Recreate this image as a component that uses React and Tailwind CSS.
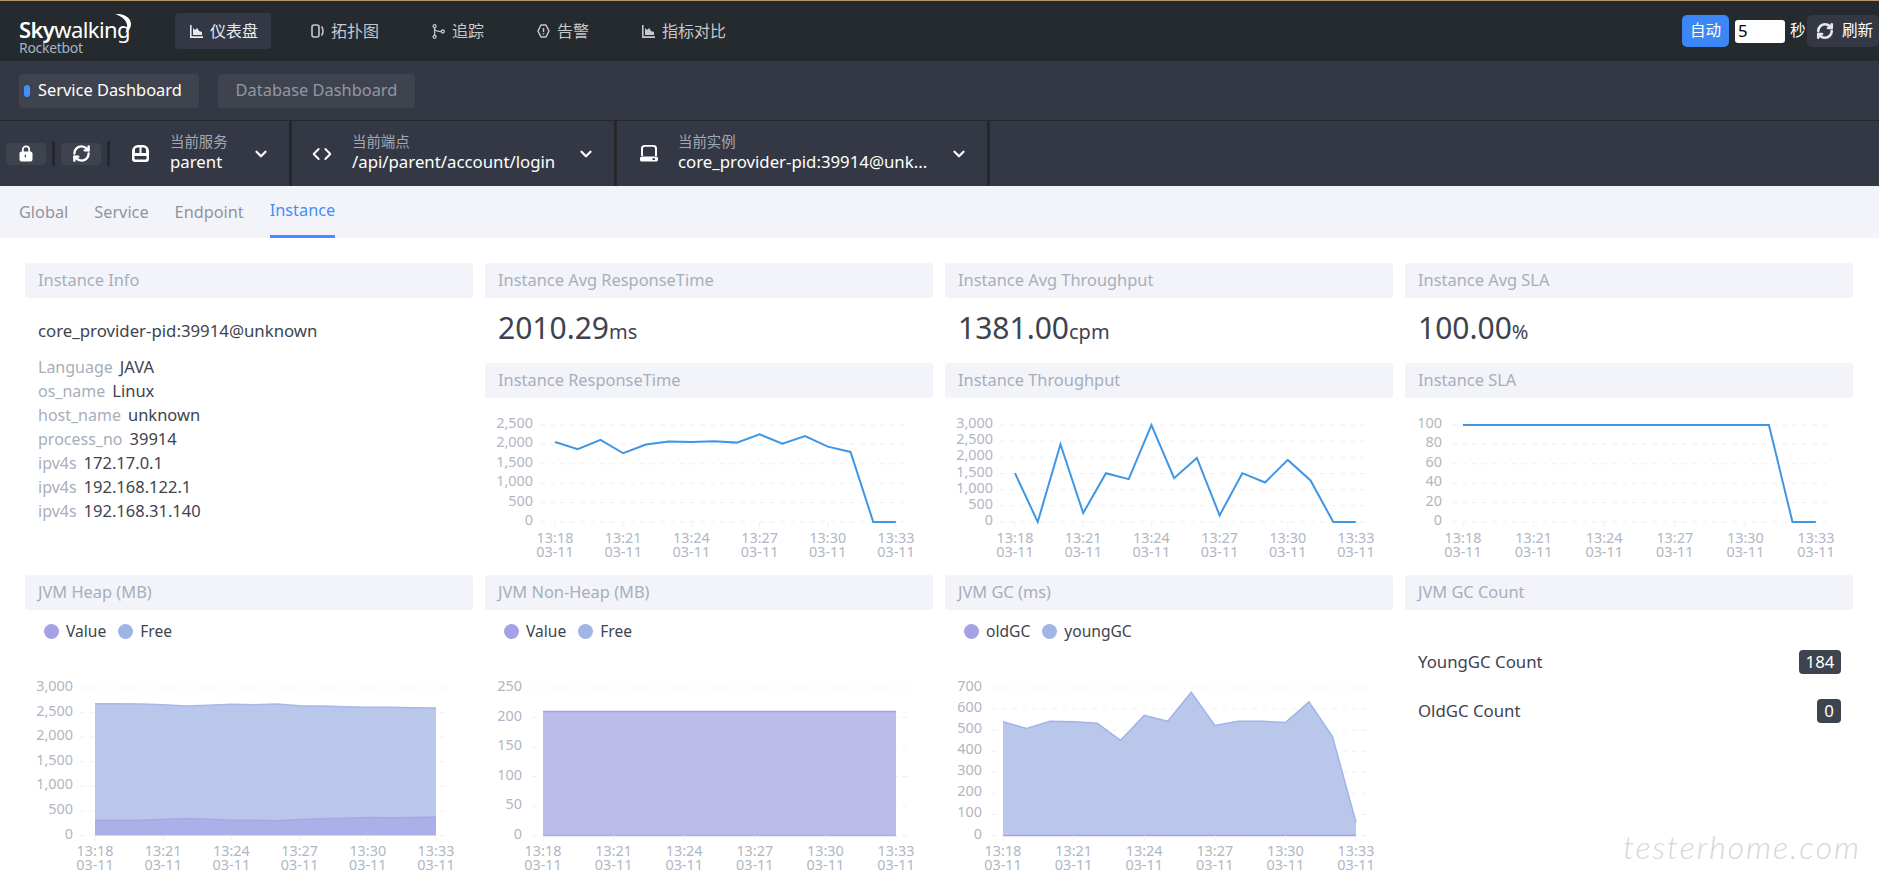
import { ChevronDown, Code, RefreshCw } from 'lucide-react';

const font = { fontFamily: '"Noto Sans", "Noto Sans CJK SC", sans-serif' };

const times = ['13:18', '13:21', '13:24', '13:27', '13:30', '13:33'];

const rtData = [2063, 1875, 2115, 1772, 1995, 2072, 2063, 2080, 2046, 2260, 2020, 2217, 1943, 1806, 0, 0];
const tpData = [1510, 0, 2404, 277, 1510, 1325, 3000, 1356, 1983, 205, 1510, 1222, 1921, 1284, 0, 0];
const slaData = [100, 100, 100, 100, 100, 100, 100, 100, 100, 100, 100, 100, 100, 100, 0, 0];
const heapValue = [305, 305, 312, 326, 346, 332, 312, 312, 299, 326, 339, 353, 367, 360, 367, 373];
const heapTotal = [2682, 2682, 2675, 2661, 2634, 2648, 2668, 2661, 2675, 2641, 2634, 2621, 2607, 2607, 2600, 2594];
const nonHeap = Array(16).fill(210);
const zero = Array(16).fill(0);
const gcTotal = [540, 508, 542, 540, 533, 452, 570, 542, 680, 522, 542, 542, 536, 634, 470, 62];

const small = { gridTop: 27, gridBottom: 124, labelY: [145, 159], height: 177 };
const big = { gridTop: 38, gridBottom: 185.5, labelY: [206, 220], height: 238 };
const wide = { gridL: 55, gridR: 423, first: 70, last: 411, labelRight: 48 };
const narrow = { gridL: 47, gridR: 422, first: 58, last: 411, labelRight: 37 };

function Chart({ box, frame, ticks, lines = [], areas = [] }) {
  const max = ticks[ticks.length - 1];
  const px = (i) => frame.first + (i * (frame.last - frame.first)) / 15;
  const py = (v) => box.gridBottom - (v / max) * (box.gridBottom - box.gridTop);
  const pts = (arr) => arr.map((v, i) => `${px(i)},${py(v)}`).join(' ');
  return (
    <svg width="448" height={box.height} className="block">
      {ticks.map((t) => (
        <g key={t}>
          <line x1={frame.gridL} x2={frame.gridR} y1={py(t)} y2={py(t)} stroke="#f0f1f5" strokeDasharray="5 5" />
          <text x={frame.labelRight} y={py(t) + 3} textAnchor="end" fontSize="14.4" fill="#b1b6c2">
            {t.toLocaleString('en-US')}
          </text>
        </g>
      ))}
      {areas.map((a, n) => (
        <g key={n}>
          <polygon
            points={`${pts(a.top)} ${a.base.map((v, i) => `${px(i)},${py(v)}`).reverse().join(' ')}`}
            fill={a.fill}
          />
          <polyline points={pts(a.top)} fill="none" stroke={a.stroke} strokeWidth="1.5" />
        </g>
      ))}
      {lines.map((l, n) => (
        <polyline key={n} points={pts(l)} fill="none" stroke="#3f96e3" strokeWidth="2" />
      ))}
      {times.map((t, n) => (
        <g key={t} fontSize="14.4" fill="#b1b6c2" textAnchor="middle">
          <line x1={px(n * 3)} x2={px(n * 3)} y1={box.gridBottom} y2={box.gridBottom + 5} stroke="#eef0f4" />
          <text>
            <tspan x={px(n * 3)} y={box.labelY[0]}>{t}</tspan>
            <tspan x={px(n * 3)} y={box.labelY[1]}>03-11</tspan>
          </text>
        </g>
      ))}
    </svg>
  );
}

function CardTitle({ children }) {
  return (
    <div className="h-[35px] bg-[#f3f4f9] rounded-[3px] pl-[13px] pb-[1px] flex items-center text-[16.400px] text-[#a7aebb]">
      {children}
    </div>
  );
}

function AvgValue({ value, unit }) {
  return (
    <div className="h-[65px] pl-[13px] pt-[8px] flex items-baseline text-[#3d444f]">
      <span className="text-[30px] leading-[44px]">{value}</span>
      <span className="text-[20px]">{unit}</span>
    </div>
  );
}

function Legend({ names }) {
  return (
    <div className="h-[40px] pl-[19px] pt-[3px] flex items-center gap-[12px] text-[15.600px] text-[#3d444f]">
      {names.map((name, i) => (
        <div key={name} className="flex items-center gap-[7px]">
          <span className={i === 0 ? 'w-[15px] h-[15px] rounded-full bg-[#a4a1e6]' : 'w-[15px] h-[15px] rounded-full bg-[#a0b4e8]'} />
          <span>{name}</span>
        </div>
      ))}
    </div>
  );
}

function InfoRow({ label, value }) {
  return (
    <div className="h-[24px] leading-[24px] flex items-baseline gap-[7px]">
      <span className="text-[16px] text-[#a7aebb]">{label}</span>
      <span className="text-[16.500px] text-[#3d444f]">{value}</span>
    </div>
  );
}

function IconChart() {
  return (
    <svg width="13" height="13" viewBox="0 0 13 13" fill="currentColor">
      <path d="M0 0h1.6v11.2H13V13H0z" />
      <path d="M3 10V3l2 2 2.2-2L9 6l3 1v3z" />
    </svg>
  );
}

function IconTopo() {
  return (
    <svg width="13" height="14" viewBox="0 0 13 14" fill="none" stroke="currentColor" strokeWidth="1.6">
      <rect x="1" y="1" width="7" height="12" rx="2" />
      <path d="M10.5 2.5c2 2.5 2 6.500 0 9" />
    </svg>
  );
}

function IconTrace() {
  return (
    <svg width="13" height="15" viewBox="0 0 13 15" fill="none" stroke="currentColor" strokeWidth="1.3">
      <circle cx="2.6" cy="2.2" r="1.5" />
      <circle cx="2.6" cy="12.8" r="1.5" />
      <circle cx="10.8" cy="7.5" r="1.5" />
      <path d="M2.6 3.7v7.6M2.8 5.500c1 1.6 3 2 6.500 2" />
    </svg>
  );
}

function IconAlert() {
  return (
    <svg width="13" height="14" viewBox="0 0 13 14" fill="none" stroke="currentColor" strokeWidth="1.5">
      <path d="M4 1h5l3 6-3 6H4L1 7z" strokeLinejoin="round" />
      <path d="M6.5 4v4M6.5 9.2v1.2" />
    </svg>
  );
}

function IconLock() {
  return (
    <svg width="14" height="17" viewBox="0 0 14 17" fill="#fff">
      <path d="M3.8 7V4.600a3.2 3.2 0 0 1 6.400 0V7" fill="none" stroke="#fff" strokeWidth="1.8" />
      <path fillRule="evenodd" d="M2.500 6.500h9a2 2 0 0 1 2 2v6a2 2 0 0 1-2 2h-9a2 2 0 0 1-2-2v-6a2 2 0 0 1 2-2zM7 9.500a1.500 1.500 0 1 0 .01 3z" />
    </svg>
  );
}

function IconService() {
  return (
    <svg width="17" height="17" viewBox="0 0 17 17" fill="#fff">
      <path
        fillRule="evenodd"
        d="M6 0h5a6 6 0 0 1 6 6v8a3 3 0 0 1-3 3H3a3 3 0 0 1-3-3V6a6 6 0 0 1 6-6zM3 4v4h4.500V2.500H6A3 3 0 0 0 3 4zM9.500 2.500V8H14V4a3 3 0 0 0-3-1.500zM2.500 11v2.500a1 1 0 0 0 1 1h10a1 1 0 0 0 1-1V11z"
      />
    </svg>
  );
}

function IconInstance() {
  return (
    <svg width="18" height="17" viewBox="0 0 18 20" preserveAspectRatio="none" fill="#fff">
      <path fillRule="evenodd" d="M5 0h8a4 4 0 0 1 4 4v9H15V4a2 2 0 0 0-2-2H5a2 2 0 0 0-2 2v9H1V4a4 4 0 0 1 4-4z" />
      <path fillRule="evenodd" d="M2 13.500h14a2 2 0 0 1 2 2v2a2 2 0 0 1-2 2H2a2 2 0 0 1-2-2v-2a2 2 0 0 1 2-2zM12.500 15.500v2h2.500v-2z" />
    </svg>
  );
}

function NavItem({ icon, label, active }) {
  return (
    <div className={active ? 'h-[36px] pl-[15px] pr-[13px] flex items-center gap-[7px] rounded-[4px] bg-[#333844] text-[#e8eaee]' : 'h-[36px] pl-[15px] pr-[13px] flex items-center gap-[7px] text-[#c5c8cc]'}>
      {icon}
      <span className="text-[16px]">{label}</span>
    </div>
  );
}

function Selector({ className, icon, label, value, textClass }) {
  return (
    <div className={`flex items-center border-r-[3px] border-[#24282d] ${className}`}>
      {icon}
      <div className={`flex flex-col ${textClass}`}>
        <span className="text-[14.400px] leading-[18px] text-[#a3a9b3]">{label}</span>
        <span className="-mt-[1px] text-[16.800px] leading-[24px] text-white whitespace-nowrap">{value}</span>
      </div>
      <ChevronDown size={18} strokeWidth={3} className="ml-auto mr-[19px] text-white" />
    </div>
  );
}

export default function App() {
  return (
    <div style={font} className="relative w-[1879px] h-[888px] overflow-hidden bg-white">
      <div className="h-[1px] bg-[#b49a6a]" />
      <header className="h-[60px] bg-[#252a2e] flex items-center pl-[19px]">
        <div className="relative w-[156px] h-[40px] pt-[6px] text-white">
          <div className="text-[22px] leading-[24px] tracking-[-0.6px] whitespace-nowrap">
            <span className="font-semibold">Sky</span>walking
          </div>
          <div className="-mt-[1px] text-[14px] leading-[16px] tracking-[-0.3px] text-[#a5b2c2]">Rocketbot</div>
          <svg width="18" height="19" viewBox="0 0 18 19" className="absolute left-[94px] top-[3px]" fill="#fff">
            <path d="M2 0c9-1 16 4 16 10 0 4-2 7-6 9 2-3 3-6 1.500-10C12 5 8 2 2 0z" />
          </svg>
        </div>
        <nav className="flex items-center gap-[25px]">
          <NavItem icon={<IconChart />} label="仪表盘" active />
          <NavItem icon={<IconTopo />} label="拓扑图" />
          <NavItem icon={<IconTrace />} label="追踪" />
          <NavItem icon={<IconAlert />} label="告警" />
          <NavItem icon={<IconChart />} label="指标对比" />
        </nav>
        <div className="ml-auto flex items-center text-white text-[15.600px]">
          <button className="w-[47px] h-[32px] rounded-[5px] bg-[#3d86f6]">自动</button>
          <input readOnly value="5" className="ml-[6px] w-[50px] h-[23px] pl-[3px] rounded-[3px] bg-white text-black text-[16.800px] outline-none" />
          <span className="ml-[5px] w-[17px]">秒</span>
          <button className="w-[72px] h-[32px] rounded-[5px] bg-[#333844] flex items-center pl-[9px] gap-[8px]">
            <RefreshCw size={18} strokeWidth={3.5} className="text-[#e5e6e9]" />
            <span>刷新</span>
          </button>
        </div>
      </header>

      <div className="h-[59px] bg-[#333844] flex items-center pl-[19px] gap-[19px]">
        <div className="w-[180px] h-[34px] rounded-[4px] bg-[#3f434e] flex items-center pl-[5px] gap-[8px] text-[16.400px] text-white">
          <span className="w-[6px] h-[12px] rounded-full bg-[#448dfe]" />
          Service Dashboard
        </div>
        <div className="w-[197px] h-[34px] rounded-[4px] bg-[#3f434e] flex items-center justify-center text-[16.400px] text-[#9198a3]">
          Database Dashboard
        </div>
      </div>

      <div className="h-[66px] bg-[#333844] border-t border-[#24282d] flex">
        <div className="flex items-center w-[132px] pl-[6px]">
          <div className="w-[40px] h-[22px] rounded-[4px] bg-[#3f434e] flex items-center justify-center"><IconLock /></div>
          <div className="ml-[6px] w-[3px] h-[25px] bg-[#24282d]" />
          <div className="ml-[6px] w-[40px] h-[22px] rounded-[4px] bg-[#3f434e] flex items-center justify-center">
            <RefreshCw size={19} strokeWidth={3} className="text-white" />
          </div>
          <div className="ml-[6px] w-[3px] h-[25px] bg-[#24282d]" />
        </div>
        <Selector className="w-[160px]" icon={<IconService />} textClass="ml-[21px]" label="当前服务" value="parent" />
        <Selector className="w-[325px] pl-[20px]" icon={<Code size={20} strokeWidth={2.2} className="text-white" />} textClass="ml-[20px]" label="当前端点" value="/api/parent/account/login" />
        <Selector className="w-[373px] pl-[23px]" icon={<IconInstance />} textClass="ml-[20px]" label="当前实例" value="core_provider-pid:39914@unk..." />
      </div>

      <div className="h-[52px] bg-[#f3f4f9] flex pl-[19px] gap-[26px] text-[16.300px] text-[#8f949e]">
        <div className="flex items-center">Global</div>
        <div className="flex items-center">Service</div>
        <div className="flex items-center">Endpoint</div>
        <div className="flex items-center border-b-[3px] border-[#448dfe] text-[#448dfe]">Instance</div>
      </div>

      <main className="pl-[25px] pt-[25px] grid grid-cols-[448px_448px_448px_448px] grid-rows-[100px_212px_auto] gap-x-[12px]">
        <section className="row-span-2">
          <CardTitle>Instance Info</CardTitle>
          <div className="pl-[13px] pt-[21px]">
            <div className="h-[24px] leading-[24px] mb-[12px] text-[16.800px] text-[#3d444f]">core_provider-pid:39914@unknown</div>
            <InfoRow label="Language" value="JAVA" />
            <InfoRow label="os_name" value="Linux" />
            <InfoRow label="host_name" value="unknown" />
            <InfoRow label="process_no" value="39914" />
            <InfoRow label="ipv4s" value="172.17.0.1" />
            <InfoRow label="ipv4s" value="192.168.122.1" />
            <InfoRow label="ipv4s" value="192.168.31.140" />
          </div>
        </section>

        <section>
          <CardTitle>Instance Avg ResponseTime</CardTitle>
          <AvgValue value="2010.29" unit="ms" />
        </section>
        <section>
          <CardTitle>Instance Avg Throughput</CardTitle>
          <AvgValue value="1381.00" unit="cpm" />
        </section>
        <section>
          <CardTitle>Instance Avg SLA</CardTitle>
          <AvgValue value="100.00" unit="%" />
        </section>

        <section>
          <CardTitle>Instance ResponseTime</CardTitle>
          <Chart box={small} frame={wide} ticks={[0, 500, 1000, 1500, 2000, 2500]} lines={[rtData]} />
        </section>
        <section>
          <CardTitle>Instance Throughput</CardTitle>
          <Chart box={small} frame={wide} ticks={[0, 500, 1000, 1500, 2000, 2500, 3000]} lines={[tpData]} />
        </section>
        <section>
          <CardTitle>Instance SLA</CardTitle>
          <Chart box={small} frame={narrow} ticks={[0, 20, 40, 60, 80, 100]} lines={[slaData]} />
        </section>

        <section>
          <CardTitle>JVM Heap (MB)</CardTitle>
          <Legend names={['Value', 'Free']} />
          <Chart
            box={big}
            frame={wide}
            ticks={[0, 500, 1000, 1500, 2000, 2500, 3000]}
            areas={[
              { top: heapTotal, base: heapValue, fill: '#b9c7ea', stroke: '#a8b8e8' },
              { top: heapValue, base: zero, fill: '#abb0e8', stroke: '#a4a8e6' },
            ]}
          />
        </section>
        <section>
          <CardTitle>JVM Non-Heap (MB)</CardTitle>
          <Legend names={['Value', 'Free']} />
          <Chart
            box={big}
            frame={narrow}
            ticks={[0, 50, 100, 150, 200, 250]}
            areas={[
              { top: nonHeap, base: zero, fill: '#bcbbea', stroke: '#a4a1e6' },
              { top: zero, base: zero, fill: 'none', stroke: '#a0b4e8' },
            ]}
          />
        </section>
        <section>
          <CardTitle>JVM GC (ms)</CardTitle>
          <Legend names={['oldGC', 'youngGC']} />
          <Chart
            box={big}
            frame={narrow}
            ticks={[0, 100, 200, 300, 400, 500, 600, 700]}
            areas={[
              { top: gcTotal, base: zero, fill: '#b9c7ea', stroke: '#a0b4e8' },
              { top: zero, base: zero, fill: 'none', stroke: '#a4a1e6' },
            ]}
          />
        </section>
        <section className="text-[16.800px] text-[#3d444f]">
          <CardTitle>JVM GC Count</CardTitle>
          <div className="pl-[13px] pr-[12px] pt-[40px] flex flex-col gap-[25px]">
            <div className="h-[24px] flex items-center justify-between">
              <span>YoungGC Count</span>
              <span className="w-[42px] h-[24px] rounded-[4px] bg-[#3d444f] text-white flex items-center justify-center">184</span>
            </div>
            <div className="h-[24px] flex items-center justify-between">
              <span>OldGC Count</span>
              <span className="w-[24px] h-[24px] rounded-[4px] bg-[#3d444f] text-white flex items-center justify-center">0</span>
            </div>
          </div>
        </section>
      </main>

      <div className="absolute left-[1623px] top-[827px] text-[32px] leading-[40px] italic font-light tracking-[2px] text-[#d6d6d6] whitespace-nowrap" style={{ fontFamily: '"Lato", sans-serif' }}>
        testerhome.com
      </div>
    </div>
  );
}
